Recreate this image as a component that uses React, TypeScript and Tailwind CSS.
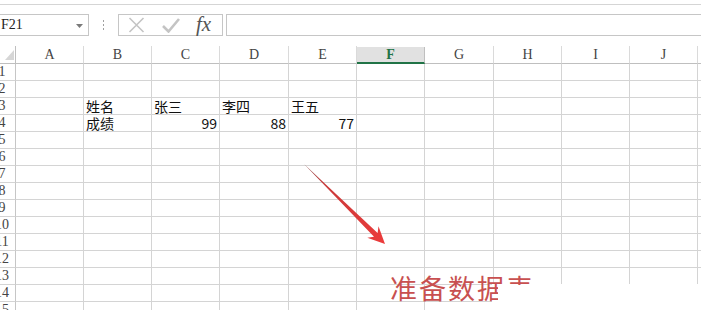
import React from "react";

const COLS = ["A", "B", "C", "D", "E", "F", "G", "H", "I", "J", ""];
const DATA: Record<number, Record<number, { t: string; right?: boolean }>> = {
  3: { 1: { t: "姓名" }, 2: { t: "张三" }, 3: { t: "李四" }, 4: { t: "王五" } },
  4: { 1: { t: "成绩" }, 2: { t: "99", right: true }, 3: { t: "88", right: true }, 4: { t: "77", right: true } },
};

export default function App() {
  const rows = Array.from({ length: 15 }, (_, i) => i + 1);
  return (
    <div className="relative w-[701px] h-[310px] overflow-hidden bg-white">
      <div className="h-[4px]" />
      {/* formula bar area */}
      <div className="h-[42px] border-t border-[#d5d5d5] flex items-start pt-[9px]">
        <div className="relative -ml-[1px] w-[90px] h-[22px] border border-[#c6c6c6] bg-white flex items-center">
          <span className="pl-[1px] text-[14px] leading-none text-[#222] font-['Liberation_Serif',serif]">F21</span>
          <svg className="absolute left-[76px] top-[9px]" width="7" height="4" viewBox="0 0 7 4">
            <polygon points="0,0 7,0 3.5,4" fill="#7a7a7a" />
          </svg>
        </div>
        <div className="w-[29px] h-[22px] flex items-center justify-center">
          <div className="flex flex-col gap-[2px]">
            <span className="w-[1px] h-[2px] bg-[#a0a0a0]" />
            <span className="w-[1px] h-[2px] bg-[#a0a0a0]" />
            <span className="w-[1px] h-[2px] bg-[#a0a0a0]" />
          </div>
        </div>
        <div className="w-[105px] h-[22px] border border-[#c6c6c6] bg-white flex items-center">
          <svg className="ml-[9px]" width="17" height="16" viewBox="0 0 17 16">
            <path d="M1.5 1 L15.5 15 M15.5 1 L1.5 15" stroke="#c4c4c4" strokeWidth="1.6" fill="none" />
          </svg>
          <svg className="ml-[17px]" width="18" height="16" viewBox="0 0 18 16">
            <path d="M1 9 L6.5 14.5 L17 2" stroke="#c4c4c4" strokeWidth="2.6" fill="none" />
          </svg>
          <span className="ml-[16px] -mt-[2px] text-[21px] leading-none italic text-[#555] font-['Liberation_Serif',serif]">
            fx
          </span>
        </div>
        <div className="ml-[3px] flex-1 h-[22px] border border-[#c6c6c6] -mr-[2px] bg-white" />
      </div>

      {/* sheet grid */}
      <div className="grid grid-cols-[16px_68px_68px_68px_69px_68px_68px_69px_68px_68px_68px_1fr] grid-rows-[18px_repeat(15,17px)] font-['Liberation_Serif',serif]">
        {/* header row */}
        <div className="relative border-r border-b border-[#bfbfbf]">
          <svg className="absolute left-[5px] top-[4px]" width="9" height="10" viewBox="0 0 9 10">
            <polygon points="9,0 9,10 0,10" fill="#d6d6d6" />
          </svg>
        </div>
        {COLS.map((c, i) =>
          c === "F" ? (
            <div
              key={i}
              className="mt-[1px] bg-[#e1e1e1] border-r border-[#bfbfbf] border-b-2 border-b-[#217346] flex items-center justify-center text-[14px] font-bold text-[#217346] leading-none"
            >
              {c}
            </div>
          ) : (
            <div
              key={i}
              className="border-r border-b border-r-[#dadada] border-b-[#bfbfbf] flex items-center justify-center text-[14px] text-[#444] leading-none"
            >
              {c}
            </div>
          )
        )}
        {rows.map((r) => (
          <React.Fragment key={r}>
            <div className="overflow-hidden border-r border-b border-r-[#c6c6c6] border-b-[#d4d4d4]">
              <div className="w-[28px] -ml-[12px] text-center text-[14px] leading-[16px] text-[#444]">{r}</div>
            </div>
            {COLS.map((_, ci) => {
              const cell = DATA[r]?.[ci];
              return (
                <div
                  key={ci}
                  className={
                    "border-r border-b border-[#d4d4d4] overflow-visible whitespace-nowrap px-[2px] text-[14px] leading-[17px] text-[#111] font-['Noto_Sans_CJK_SC','Noto_Sans',sans-serif] " +
                    (cell?.right ? "text-right" : "text-left")
                  }
                >
                  {cell?.t ?? ""}
                </div>
              );
            })}
          </React.Fragment>
        ))}
      </div>

      {/* red arrow annotation */}
      <svg className="absolute left-0 top-0 pointer-events-none" width="701" height="310" viewBox="0 0 701 310">
        <defs>
          <linearGradient id="arrowGrad" x1="304" y1="164" x2="385" y2="244" gradientUnits="userSpaceOnUse">
            <stop offset="0" stopColor="#8a4a4a" />
            <stop offset="0.25" stopColor="#c83a3a" />
            <stop offset="1" stopColor="#ec3b3b" />
          </linearGradient>
        </defs>
        <polygon
          points="304,164 377.6,233.1 378.5,226.3 385,244 367.3,237.7 374.0,236.7"
          fill="url(#arrowGrad)"
        />
      </svg>

      {/* annotation box */}
      <div className="absolute left-[492px] top-[284px] right-0 bottom-0 bg-white" />
      <div className="absolute left-[390px] top-[271px] whitespace-nowrap text-[27px] leading-[34px] tracking-[2px] text-[#c85050] font-['Noto_Sans_CJK_SC',sans-serif]">
        准备数据表
      </div>
      <div className="absolute left-[498px] top-[285px] right-0 bottom-0 bg-white" />
    </div>
  );
}
